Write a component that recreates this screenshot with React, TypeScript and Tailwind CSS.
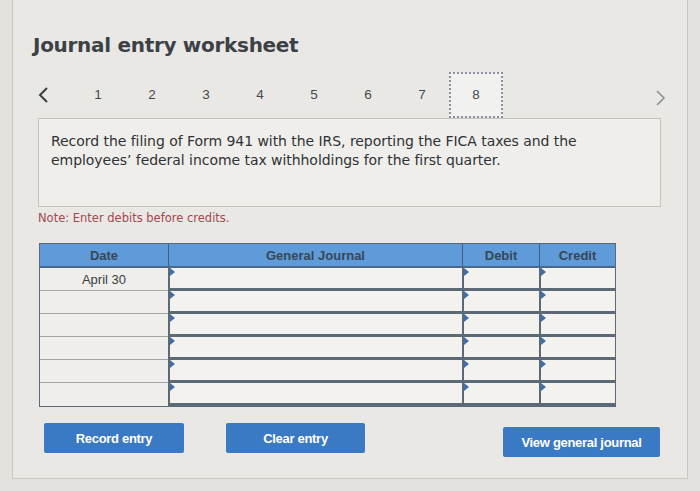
import React from 'react';

const steps = [1, 2, 3, 4, 5, 6, 7, 8];
const rows = ['April 30', '', '', '', '', ''];

const Marker: React.FC = () => (
    <span className="absolute left-0 top-0 w-0 h-0 border-t-[4px] border-b-[4px] border-l-[5px] border-t-transparent border-b-transparent border-l-[#3f6fa8]" />
);

const InputCell: React.FC<{ className?: string }> = ({ className = '' }) => (
    <div className={`relative h-[23px] bg-[#f3f2ef] border-l-2 border-b-[3px] border-[#5c6a78] ${className}`}>
        <Marker />
    </div>
);

const App: React.FC = () => {
    return (
        <div className="w-[700px] h-[491px] bg-[#e2e1dd] overflow-hidden" style={{ fontFamily: '"Liberation Sans", Arial, sans-serif' }}>
            <div className="ml-[12px] mr-[12px] h-[479px] bg-[#e9e8e5] border-l border-r border-b border-[#cbc9c4] relative">
                {/* title */}
                <h1 className="pt-[30px] pl-[20px] text-[20px] font-bold text-[#3c4146] tracking-[-0.3px]" style={{ fontFamily: '"DejaVu Sans", Verdana, sans-serif' }}>
                    Journal entry worksheet
                </h1>

                {/* step nav */}
                <div className="flex items-center h-[46px] mt-[12px] pl-[18px]">
                    <div className="w-[40px] flex items-center">
                        <svg width="12" height="18" viewBox="0 0 12 18" className="ml-[6px]">
                            <path d="M10 2 L3 9 L10 16" fill="none" stroke="#3b3f44" strokeWidth="2" />
                        </svg>
                    </div>
                    {steps.map(s => (
                        <div
                            key={s}
                            className={`w-[54px] h-[46px] flex items-center justify-center text-[13.5px] text-[#45484c] ${s === 8 ? 'border-2 border-dotted border-[#8a90a0] bg-[#f1f1ef]' : ''}`}
                        >
                            {s}
                        </div>
                    ))}
                    <div className="flex-1 flex justify-end pr-[20px]">
                        <svg width="12" height="18" viewBox="0 0 12 18" className="mt-[6px]">
                            <path d="M2 2 L9 9 L2 16" fill="none" stroke="#8d9096" strokeWidth="1.6" />
                        </svg>
                    </div>
                </div>

                {/* description */}
                <div className="ml-[25px] w-[623px] h-[89px] bg-[#efeeeb] border border-[#c6c4bf] pl-[12px] pt-[13px]">
                    <p className="text-[14px] leading-[19px] text-[#2f3235]" style={{ fontFamily: '"DejaVu Sans", Verdana, sans-serif', letterSpacing: '-0.05px' }}>
                        Record the filing of Form 941 with the IRS, reporting the FICA taxes and the<br />
                        employees’ federal income tax withholdings for the first quarter.
                    </p>
                </div>

                <p className="ml-[25px] mt-[3px] text-[11.5px] text-[#a3474f]" style={{ fontFamily: '"DejaVu Sans", Verdana, sans-serif' }}>
                    Note: Enter debits before credits.
                </p>

                {/* table */}
                <div className="ml-[26px] mt-[16px] w-[577px] border border-[#5c6a78]">
                    <div className="flex h-[24px] bg-[#5f9bd8] text-[13px] font-bold text-[#384656] border-b-2 border-[#4c6888]">
                        <div className="w-[128px] flex items-center justify-center">Date</div>
                        <div className="w-[294px] flex items-center justify-center border-l border-[#3f5e80]">General Journal</div>
                        <div className="w-[77px] flex items-center justify-center border-l border-[#3f5e80]">Debit</div>
                        <div className="flex-1 flex items-center justify-center border-l border-[#3f5e80]">Credit</div>
                    </div>
                    {rows.map((d, i) => (
                        <div key={i} className="flex">
                            <div className={`w-[128px] h-[23px] flex items-center justify-center text-[13px] text-[#3a3d40] bg-[#efeeeb] ${i < rows.length - 1 ? 'border-b border-[#a4a4a2]' : ''}`}>
                                {d}
                            </div>
                            <InputCell className="w-[294px]" />
                            <InputCell className="w-[77px]" />
                            <InputCell className="flex-1" />
                        </div>
                    ))}
                </div>

                {/* buttons */}
                <div className="flex items-start ml-[31px] mt-[16px]">
                    <button className="w-[140px] h-[30px] bg-[#3a79c3] rounded-[2px] text-white text-[13px] font-bold tracking-[-0.3px]">
                        Record entry
                    </button>
                    <button className="ml-[42px] w-[139px] h-[30px] bg-[#3a79c3] rounded-[2px] text-white text-[13px] font-bold tracking-[-0.3px]">
                        Clear entry
                    </button>
                    <button className="ml-[138px] mt-[4px] w-[157px] h-[30px] bg-[#3a79c3] rounded-[2px] text-white text-[13px] font-bold tracking-[-0.3px]">
                        View general journal
                    </button>
                </div>
            </div>
        </div>
    );
};

export default App;
